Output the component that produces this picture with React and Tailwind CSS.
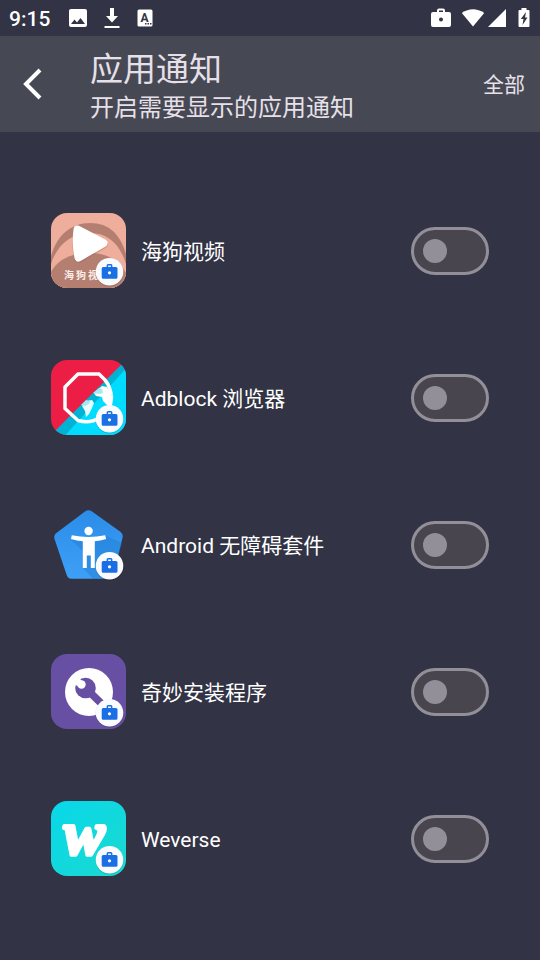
import React, { useState } from "react";
import { MdImage } from "react-icons/md";

const WorkBadge = () => (
  <g>
    <circle cx="58.5" cy="59.5" r="14" fill="#000" opacity="0.15" />
    <circle cx="58.5" cy="58.7" r="13.8" fill="#fafbfe" />
    <path
      fillRule="evenodd"
      fill="#1b6fe4"
      d="M55.6 54v-1.600q0-1.500 1.500-1.500h2.800q1.500 0 1.500 1.500V54h3.600q1.500 0 1.500 1.500v8.700q0 1.500-1.500 1.500H52.200q-1.500 0-1.500-1.500v-8.700q0-1.500 1.500-1.500zm1.500 0h2.800v-1.500h-2.800z"
    />
    <circle cx="58.5" cy="59.8" r="1.600" fill="#fff" />
  </g>
);

const VideoIcon = () => (
  <svg viewBox="0 0 75 75" className="size-[75px] rounded-2xl" aria-hidden="true">
    <rect width="75" height="75" fill="#efae9b" />
    <path d="M0 43C6 22 20 10 39 10s30 11 36 31v34H0z" fill="#b47f70" />
    <path d="M0 51C6 32 20 20 39 20s30 12 36 31v24H0z" fill="#efae9b" />
    <path d="M0 59C7 46 21 40 39 40s29 8 36 20v15H0z" fill="#b47f70" />
    <path
      d="M26.500 16.500L52.500 30 27.500 44.500Q24.500 30 26.500 16.500z"
      fill="#8a5a4d"
      stroke="#8a5a4d"
      strokeWidth="9"
      strokeLinejoin="round"
      opacity="0.25"
      transform="translate(0 1)"
    />
    <path
      d="M26.500 16.500L52.500 30 27.500 44.500Q24.500 30 26.500 16.500z"
      fill="#fff"
      stroke="#fff"
      strokeWidth="8"
      strokeLinejoin="round"
    />
    <text
      x="13 25 37"
      y="66"
      fontSize="10"
      fontWeight="700"
      fill="#fbeeea"
      className="font-['Noto_Sans_CJK_SC',sans-serif]"
    >
      海狗视
    </text>
    <WorkBadge />
  </svg>
);

const AdblockIcon = () => (
  <svg viewBox="0 0 75 75" className="size-[75px] rounded-2xl" aria-hidden="true">
    <rect width="75" height="75" fill="#ed1e46" />
    <path d="M75 0L0 75h75z" fill="#00b3d3" />
    <path d="M75 8.500L14.500 75H75z" fill="#00dcff" />
    <path
      d="M54 20L48 14H27L14 27v21.500L27 60.500q12 3.500 22-3 11-7 11.500-20-1-11-6.500-17.500z"
      fill="none"
      stroke="#fff"
      strokeWidth="3.500"
      strokeLinejoin="round"
    />
    <path d="M43 33l8-7 5 1 4 8 1 12-5-2-4-4-1-4-6-1z" fill="#fff" />
    <path d="M31 46l5-5 5-1 2 3-2 5-3 6-3 3-1-6z" fill="#e8fbff" />
    <path d="M42 33l6-5 3 1 1 4-4 1z" fill="#a4e8f4" />
    <path d="M30 45l5-5 4 1-1 3-4 2z" fill="#a4e8f4" />
    <WorkBadge />
  </svg>
);

const AccessibilityIcon = () => (
  <svg viewBox="0 0 75 75" className="size-[75px]" aria-hidden="true">
    <defs>
      <linearGradient id="pentagon" x1="0" y1="0" x2="0" y2="1">
        <stop offset="0" stopColor="#2b8de8" />
        <stop offset="1" stopColor="#3d9ff5" />
      </linearGradient>
    </defs>
    <path
      d="M34 4.500q3.500-2.600 7 0l28 20q3.700 2.600 2.500 6.500L62 68q-1.200 3.700-5 3.700H20.500q-3.800 0-4.800-3.700L3.500 32q-1.200-4 2.500-6.500z"
      fill="url(#pentagon)"
    />
    <path d="M20 33l12 11v17l10 10.700h15q3.800 0 5-3.700l9-32-16-7-12 5z" fill="#1f78cf" opacity="0.4" />
    <circle cx="37.600" cy="24" r="4.200" fill="#fff" />
    <path
      d="M20.800 28.200q16.800 3.400 33.400 0l.9 3.800q-5.500 1.700-11.300 2.200v26.900h-4V48.500h-4v12.600h-4V34.200q-6-.5-11.800-2.200z"
      fill="#fff"
    />
    <WorkBadge />
  </svg>
);

const InstallerIcon = () => (
  <svg viewBox="0 0 75 75" className="size-[75px] rounded-2xl" aria-hidden="true">
    <rect width="75" height="75" fill="#6750a4" />
    <circle cx="38" cy="38" r="24" fill="#fff" />
    {/* wrench */}
    <circle cx="34.500" cy="34" r="10.300" fill="#6750a4" />
    <path d="M38 37.500L54 53" stroke="#6750a4" strokeWidth="7.500" />
    <path d="M22 29l5-6 6 6-4.500 4.500z" fill="#fff" />
    <circle cx="30.500" cy="30.500" r="4.200" fill="#fff" />
    <WorkBadge />
  </svg>
);

const WeverseIcon = () => (
  <svg viewBox="0 0 75 75" className="size-[75px] rounded-2xl" aria-hidden="true">
    <defs>
      <linearGradient id="weverse" x1="0" y1="0" x2="1" y2="1">
        <stop offset="0" stopColor="#08d8ea" />
        <stop offset="1" stopColor="#1bd9cf" />
      </linearGradient>
    </defs>
    <rect width="75" height="75" fill="url(#weverse)" />
    <text
      x="13"
      y="53"
      fontSize="61"
      fontWeight="700"
      fontStyle="italic"
      fill="#fff"
      stroke="#fff"
      strokeWidth="4"
      strokeLinejoin="round"
      className="font-['Liberation_Serif',serif]"
    >
      w
    </text>
    <WorkBadge />
  </svg>
);

const apps = [
  { id: "haigou", name: "海狗视频", Icon: VideoIcon },
  { id: "adblock", name: "Adblock 浏览器", Icon: AdblockIcon },
  { id: "accessibility", name: "Android 无障碍套件", Icon: AccessibilityIcon },
  { id: "installer", name: "奇妙安装程序", Icon: InstallerIcon },
  { id: "weverse", name: "Weverse", Icon: WeverseIcon },
];

const StatusBar = () => (
  <div className="flex h-9 items-center justify-between pl-[9px] pr-[10px] text-white">
    <div className="flex items-center">
      <span className="pt-0.5 text-[21px] leading-6 font-medium">9:15</span>
      <MdImage className="ml-4 size-6" />
      <svg viewBox="0 0 16 22" className="ml-[14px] h-[22px] w-4" fill="currentColor" aria-hidden="true">
        <path d="M6 1h4v8h4l-6 6.500L2 9h4zM.5 19h15v2H.5z" />
      </svg>
      <svg viewBox="0 0 16 18" className="ml-[17px] h-[18px] w-4" aria-hidden="true">
        <rect x=".5" y=".5" width="15" height="17" rx="1.500" fill="#fff" />
        <text x="3.500" y="12.500" fontSize="12" fontWeight="700" fill="#323344">A</text>
        <path d="M8 14h1.500v1.500H8zM10.500 14H12v1.500h-1.500zM13 14h1.500v1.500H13z" fill="#323344" />
      </svg>
    </div>
    <div className="flex items-center">
      <svg viewBox="0 0 22 20" className="h-5 w-[22px]" fill="currentColor" aria-hidden="true">
        <path
          fillRule="evenodd"
          d="M7 4V2.500q0-2 2-2h4q2 0 2 2V4h4q2 0 2 2v11q0 2-2 2H3q-2 0-2-2V6q0-2 2-2zm2 0h4V2.500H9zm2 5.500a2 2 0 1 0 0 4 2 2 0 0 0 0-4z"
        />
      </svg>
      <svg viewBox="0 0 24 18" className="ml-[9px] h-[18px] w-6" fill="currentColor" aria-hidden="true">
        <path d="M.8 4Q12-3.500 23.200 4L12 17.500z" />
      </svg>
      <svg viewBox="0 0 18 18" className="ml-[3px] size-[18px]" fill="currentColor" aria-hidden="true">
        <path d="M18 0v18H0z" />
      </svg>
      <svg viewBox="0 0 12 20" className="ml-3 h-5 w-3" aria-hidden="true">
        <path d="M3.500 0h5v2H10.500q1 0 1 1v15q0 1-1 1h-9q-1 0-1-1V3q0-1 1-1h2z" fill="#fff" />
        <path d="M8 4L2.800 11H5.500l-1 6L9.500 9.500H7z" fill="#323344" />
      </svg>
    </div>
  </div>
);

const App = () => {
  const [enabled, setEnabled] = useState({});

  const toggle = (id) => setEnabled((prev) => ({ ...prev, [id]: !prev[id] }));

  return (
    <div className="min-h-screen bg-[#323344] font-[Roboto,'Noto_Sans_CJK_SC',sans-serif] text-[#e6e0e9]">
      <StatusBar />

      <header className="flex h-24 items-center bg-[#464854] pr-[15px]">
        <button type="button" aria-label="返回" className="flex h-full w-[90px] items-center pl-[21px]">
          <svg viewBox="0 0 24 32" className="h-8 w-6" fill="none" stroke="#fff" strokeWidth="4" aria-hidden="true">
            <path d="M19 2L5 16l14 14" />
          </svg>
        </button>
        <div className="flex-1 pt-1.5">
          <h1 className="text-[33px] leading-[42px]">应用通知</h1>
          <p className="text-2xl leading-[34px]">开启需要显示的应用通知</p>
        </div>
        <button type="button" className="pt-1 text-[21px]">全部</button>
      </header>

      {/* App list */}
      <ul className="pt-[45px] pb-12">
        {apps.map(({ id, name, Icon }) => (
          <li key={id} className="flex h-[147px] items-center px-[51px]">
            <Icon />
            <label htmlFor={id} className="flex-1 pt-0.5 pl-[15px] text-[21px] leading-8 text-white">
              {name}
            </label>
            <input
              id={id}
              type="checkbox"
              role="switch"
              checked={!!enabled[id]}
              onChange={() => toggle(id)}
              className="flex h-12 w-[78px] cursor-pointer appearance-none items-center rounded-full border-3 border-[#938f99] bg-[#49454f] px-[9px] before:size-6 before:rounded-full before:bg-[#938f99] before:content-[''] checked:justify-end checked:border-[#d0bcff] checked:bg-[#d0bcff] checked:before:bg-[#381e72]"
            />
          </li>
        ))}
      </ul>
    </div>
  );
};

export default App;
